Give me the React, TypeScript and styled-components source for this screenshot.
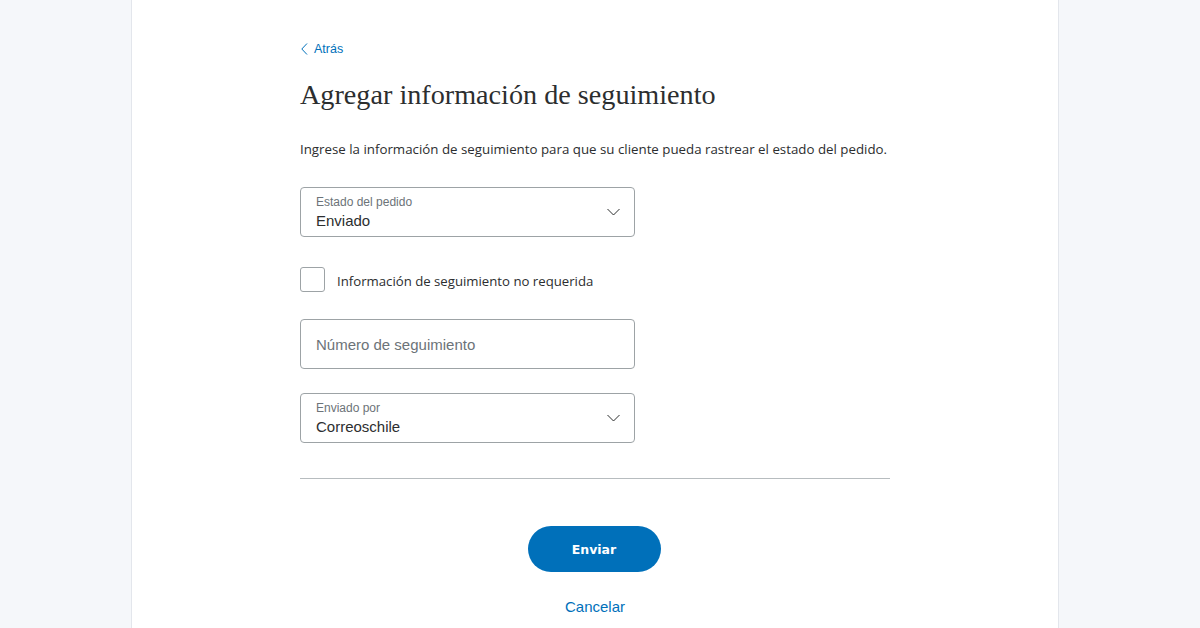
import React from "react";
import styled, { createGlobalStyle } from "styled-components";

const Global = createGlobalStyle`
  html, body { margin: 0; padding: 0; background: #f5f7fa; }
  body { font-family: "Liberation Sans", Arial, sans-serif; }
`;

const Page = styled.div`
  display: flex;
  height: 628px;
  overflow: hidden;
`;

const Card = styled.main`
  margin-left: 131px;
  width: 928px;
  box-sizing: border-box;
  background: #ffffff;
  border-left: 1px solid #e3e6ec;
  border-right: 1px solid #e3e6ec;
  padding: 40px 0 0 168px;
`;

const Column = styled.div`
  width: 590px;
  display: flex;
  flex-direction: column;
`;

const BackLink = styled.a`
  display: flex;
  align-items: center;
  gap: 6px;
  color: #0070ba;
  font-size: 12.5px;
  text-decoration: none;
  height: 17px;
  padding-left: 1px;
`;

const Title = styled.h1`
  margin: 21px 0 0;
  font-family: "Liberation Serif", "Times New Roman", serif;
  font-weight: 400;
  font-size: 28.2px;
  line-height: 34px;
  color: #2c2e2f;
`;

const Lead = styled.p`
  margin: 28px 0 0;
  font-family: "Open Sans", "DejaVu Sans", sans-serif;
  font-size: 13.3px;
  line-height: 18px;
  color: #2c2e2f;
`;

const Field = styled.div<{ $top: number }>`
  margin-top: ${(p) => p.$top}px;
  width: 335px;
  height: 50px;
  box-sizing: border-box;
  border: 1px solid #9da3a6;
  border-radius: 4px;
  display: flex;
  align-items: center;
  padding: 0 14px 0 15px;
`;

const FieldText = styled.div`
  flex: 1;
  display: flex;
  flex-direction: column;
  padding-top: 4px;
`;

const SmallLabel = styled.span`
  font-size: 12px;
  line-height: 14px;
  color: #6c7378;
`;

const Value = styled.span`
  font-size: 15px;
  line-height: 24px;
  color: #2c2e2f;
`;

const Placeholder = styled.span`
  font-size: 15px;
  color: #6c7378;
`;

const CheckRow = styled.label`
  margin-top: 30px;
  display: flex;
  align-items: center;
  gap: 12px;
`;

const Box = styled.span`
  width: 25px;
  height: 25px;
  box-sizing: border-box;
  border: 1px solid #9da3a6;
  border-radius: 3px;
`;

const CheckText = styled.span`
  font-family: "Open Sans", "DejaVu Sans", sans-serif;
  font-size: 13.2px;
  line-height: 20px;
  padding-top: 2px;
  color: #2c2e2f;
`;

const Divider = styled.hr`
  margin: 35px 0 0;
  border: 0;
  border-top: 1px solid #b7bcbf;
  width: 590px;
`;

const Actions = styled.div`
  display: flex;
  flex-direction: column;
  align-items: center;
  margin-top: 47px;
`;

const Primary = styled.button`
  width: 133px;
  height: 46px;
  border: 0;
  border-radius: 23px;
  background: #0070ba;
  color: #fff;
  font-family: "DejaVu Sans", Verdana, sans-serif;
  font-weight: 700;
  font-size: 12.5px;
  margin-left: -2px;
`;

const Secondary = styled.a`
  margin-top: 26px;
  color: #0070ba;
  font-size: 15px;
  text-decoration: none;
`;

const Chevron = () => (
  <svg width="13" height="8" viewBox="0 0 13 8" fill="none">
    <path d="M0.5 1l6 6 6-6" stroke="#2c2e2f" strokeWidth="1" />
  </svg>
);

const BackChevron = () => (
  <svg width="7" height="12" viewBox="0 0 7 12" fill="none">
    <path d="M6 0.5L0.8 6 6 11.5" stroke="#0070ba" strokeWidth="1" />
  </svg>
);

export default function App() {
  return (
    <>
      <Global />
      <Page>
        <Card>
          <Column>
            <BackLink href="#">
              <BackChevron />
              Atrás
            </BackLink>
            <Title>Agregar información de seguimiento</Title>
            <Lead>
              Ingrese la información de seguimiento para que su cliente pueda rastrear el estado del pedido.
            </Lead>
            <Field $top={29}>
              <FieldText>
                <SmallLabel>Estado del pedido</SmallLabel>
                <Value>Enviado</Value>
              </FieldText>
              <Chevron />
            </Field>
            <CheckRow>
              <Box />
              <CheckText>Información de seguimiento no requerida</CheckText>
            </CheckRow>
            <Field $top={27}>
              <Placeholder>Número de seguimiento</Placeholder>
            </Field>
            <Field $top={24}>
              <FieldText>
                <SmallLabel>Enviado por</SmallLabel>
                <Value>Correoschile</Value>
              </FieldText>
              <Chevron />
            </Field>
            <Divider />
            <Actions>
              <Primary>Enviar</Primary>
              <Secondary href="#">Cancelar</Secondary>
            </Actions>
          </Column>
        </Card>
      </Page>
    </>
  );
}
